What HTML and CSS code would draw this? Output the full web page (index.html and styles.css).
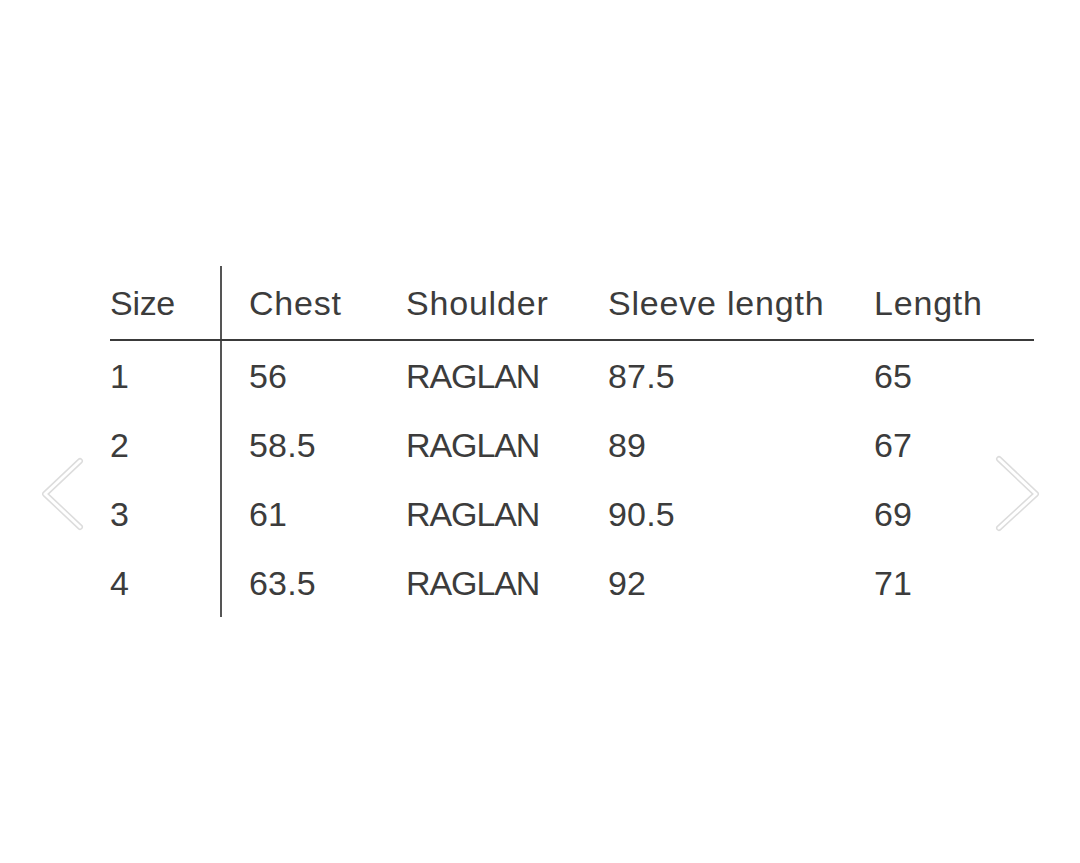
FILE: index.html
```html
<!DOCTYPE html>
<html lang="en">
<head>
<meta charset="utf-8">
<title>Size chart</title>
<link rel="stylesheet" href="styles.css">
</head>
<body>
<div class="stage">
  <table class="chart">
    <colgroup>
      <col class="c1"><col class="c2"><col class="c3"><col class="c4"><col class="c5">
    </colgroup>
    <thead>
      <tr><th>Size</th><th>Chest</th><th>Shoulder</th><th>Sleeve length</th><th>Length</th></tr>
    </thead>
    <tbody>
      <tr><td>1</td><td>56</td><td class="caps">RAGLAN</td><td>87.5</td><td>65</td></tr>
      <tr><td>2</td><td>58.5</td><td class="caps">RAGLAN</td><td>89</td><td>67</td></tr>
      <tr><td>3</td><td>61</td><td class="caps">RAGLAN</td><td>90.5</td><td>69</td></tr>
      <tr><td>4</td><td>63.5</td><td class="caps">RAGLAN</td><td>92</td><td>71</td></tr>
    </tbody>
  </table>
  <svg class="nav nav-prev" width="50" height="80" viewBox="0 0 50 80">
    <path d="M38 8 L3 41 L38 74" class="edge"/>
    <path d="M38 8 L3 41 L38 74" class="core"/>
  </svg>
  <svg class="nav nav-next" width="50" height="80" viewBox="0 0 50 80">
    <path d="M4 6 L41 41 L4 75" class="edge"/>
    <path d="M4 6 L41 41 L4 75" class="core"/>
  </svg>
</div>
</body>
</html>
```

FILE: styles.css
```css
html, body {
  margin: 0;
  padding: 0;
  background: #ffffff;
}

.stage {
  position: relative;
  width: 1080px;
  height: 863px;
  padding: 266px 0 0 110px;
  box-sizing: border-box;
  font-family: "Liberation Sans", Arial, sans-serif;
  color: #3c3c3c;
}

.chart {
  border-collapse: collapse;
  table-layout: fixed;
  width: 924px;
  font-size: 34px;
  line-height: 40px;
}

.c1 { width: 111px; }
.c2 { width: 158px; }
.c3 { width: 202px; }
.c4 { width: 266px; }
.c5 { width: 187px; }

.chart th,
.chart td {
  text-align: left;
  font-weight: normal;
  padding: 15px 0 14px 27px;
  white-space: nowrap;
  letter-spacing: 0.2px;
}

.chart th {
  padding-top: 17px;
  padding-bottom: 16px;
  border-bottom: 2px solid #3a3a3a;
  letter-spacing: 0.8px;
}

.chart th:first-child {
  letter-spacing: -0.3px;
}

.chart td.caps {
  letter-spacing: -1.1px;
}

.chart th:first-child,
.chart td:first-child {
  padding-left: 0;
  border-right: 2px solid #555555;
}

.nav {
  position: absolute;
  top: 453px;
}

.nav-prev { left: 42px; }
.nav-next { left: 995px; }

.nav path {
  fill: none;
  stroke-linecap: round;
  stroke-linejoin: round;
}

.nav .edge {
  stroke: #dcdcdc;
  stroke-width: 6;
}

.nav .core {
  stroke: #ffffff;
  stroke-width: 3;
}
```
